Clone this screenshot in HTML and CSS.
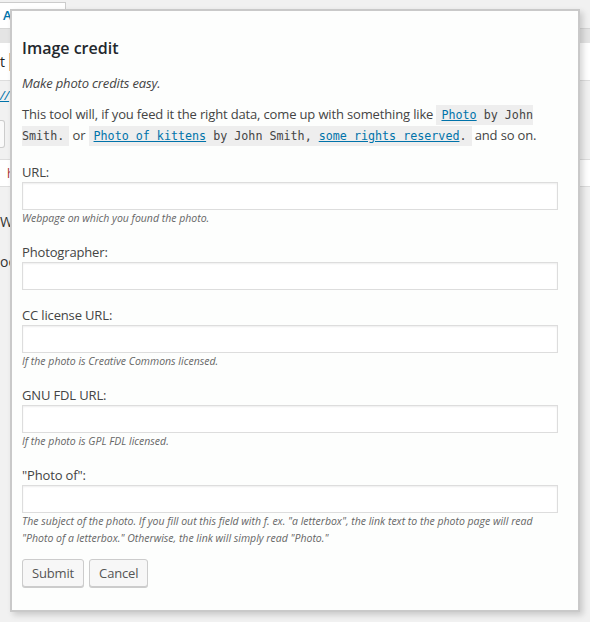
FILE: index.html
```html
<!DOCTYPE html>
<html lang="en">
<head>
<meta charset="utf-8">
<title>Image credit</title>
<link rel="stylesheet" href="styles.css">
</head>
<body>
<div class="admin">
  <div class="tabs"><span class="tab">Add</span></div>
  <div class="band"></div>
  <div class="panel"><span class="frag">t</span><span class="marker"></span></div>
  <div class="linkrow"><span class="perma">//</span></div>
  <div class="boxrow"><span class="box"></span></div>
  <div class="hrow"><span class="hchar">h</span></div>
  <div class="posts">
    <div class="textrow">Wd</div>
    <div class="textrow">oo</div>
  </div>
</div>

<div class="modal" role="dialog" aria-labelledby="ic-title">
  <h2 class="title" id="ic-title">Image credit</h2>
  <p class="lead">Make photo credits easy.</p>
  <p class="intro">This tool will, if you feed it the right data, come up with something like <code><a href="#">Photo</a> by John Smith.</code> or <code><a href="#">Photo of kittens</a> by John Smith, <a href="#">some rights reserved</a>.</code> and so on.</p>
  <form class="form">
    <div class="field">
      <label class="label" for="f-url">URL:</label>
      <input class="input" id="f-url" type="text">
      <p class="help">Webpage on which you found the photo.</p>
    </div>
    <div class="field">
      <label class="label" for="f-ph">Photographer:</label>
      <input class="input" id="f-ph" type="text">
    </div>
    <div class="field">
      <label class="label" for="f-cc">CC license URL:</label>
      <input class="input" id="f-cc" type="text">
      <p class="help">If the photo is Creative Commons licensed.</p>
    </div>
    <div class="field">
      <label class="label" for="f-gnu">GNU FDL URL:</label>
      <input class="input" id="f-gnu" type="text">
      <p class="help">If the photo is GPL FDL licensed.</p>
    </div>
    <div class="field">
      <label class="label" for="f-of">"Photo of":</label>
      <input class="input" id="f-of" type="text">
      <p class="help">The subject of the photo. If you fill out this field with f. ex. "a letterbox", the link text to the photo page will read "Photo of a letterbox." Otherwise, the link will simply read "Photo."</p>
    </div>
    <div class="actions">
      <button class="button" type="button">Submit</button>
      <button class="button" type="button">Cancel</button>
    </div>
  </form>
</div>
</body>
</html>
```
FILE: styles.css
```css
html, body {
  margin: 0;
  padding: 0;
}
body {
  background: #f1f1f1;
  font-family: "Open Sans", "Noto Sans", sans-serif;
  font-size: 13px;
  color: #444;
  width: 590px;
  height: 622px;
  overflow: hidden;
  position: relative;
}

/* background admin page */
.admin {
  display: flex;
  flex-direction: column;
}
.tabs {
  height: 28px;
  padding-top: 2px;
  box-sizing: border-box;
  display: flex;
}
.tab {
  width: 66px;
  height: 26px;
  background: #fff;
  border: 1px solid #ccc;
  border-left: none;
  border-bottom: none;
  box-sizing: border-box;
  color: #0073aa;
  font-weight: 600;
  font-size: 13px;
  line-height: 24px;
  padding-left: 3px;
}
.band {
  height: 14px;
  background: #e4e4e4;
  border-top: 1px solid #d6d6d6;
}
.panel {
  height: 37px;
  background: #fff;
  border-bottom: 1px solid #ddd;
  display: flex;
  align-items: center;
  gap: 4px;
}
.frag {
  font-size: 14px;
  color: #222;
}
.marker {
  width: 2px;
  height: 18px;
  background: #f0c28a;
}
.linkrow {
  height: 28px;
  display: flex;
  align-items: center;
}
.perma {
  color: #0073aa;
  font-style: italic;
  font-size: 13px;
  text-decoration: underline;
}
.boxrow {
  height: 50px;
  display: flex;
  align-items: center;
}
.box {
  width: 4px;
  height: 26px;
  border: 1px solid #ccc;
  border-left: none;
  border-radius: 0 3px 3px 0;
  background: #fafafa;
}
.hrow {
  height: 26px;
  background: #fff;
  border-top: 1px solid #ddd;
  border-bottom: 1px solid #ddd;
  display: flex;
  align-items: center;
  padding-left: 7px;
}
.hchar {
  color: #a33;
  font-size: 12px;
}
.posts {
  padding-top: 15px;
}
.textrow {
  height: 40px;
  line-height: 40px;
  font-size: 14px;
  color: #333;
}

/* modal overlay */
.modal {
  position: absolute;
  left: 10px;
  top: 9px;
  width: 570px;
  box-sizing: border-box;
  background: #fdfefd;
  border: 2px solid #c9c9c9;
  box-shadow: 3px 3px 6px rgba(0, 0, 0, 0.16);
  padding: 24px 20px 23px 10px;
  letter-spacing: -0.15px;
}
.title {
  margin: 0;
  font-size: 16px;
  font-weight: 600;
  line-height: 26px;
  color: #23282d;
  letter-spacing: 0;
}
.lead {
  margin: 12px 0 0;
  font-style: italic;
  line-height: 20px;
}
.intro {
  margin: 11px 0 17px;
  line-height: 21px;
}
code {
  font-family: "DejaVu Sans Mono", "Liberation Mono", monospace;
  font-size: 11.7px;
  line-height: 1;
  letter-spacing: 0;
  background: #eee;
  padding: 3px 5px;
  color: #444;
}
a {
  color: #0073aa;
  text-decoration: underline;
}
.form {
  display: flex;
  flex-direction: column;
  gap: 16px;
}
.field {
  display: flex;
  flex-direction: column;
}
.label {
  line-height: 18px;
  color: #444;
}
.input {
  margin: 1px 0 0;
  height: 28px;
  box-sizing: border-box;
  border: 1px solid #ddd;
  background: #fff;
  box-shadow: inset 0 1px 2px rgba(0, 0, 0, 0.07);
  font: inherit;
  padding: 3px 5px;
  outline: none;
}
.help {
  margin: 0;
  font-size: 10.5px;
  font-style: italic;
  line-height: 17px;
  color: #666;
  letter-spacing: 0;
}
.actions {
  display: flex;
  gap: 5px;
  margin-top: -4px;
}
.button {
  height: 28px;
  padding: 0 9px 1px;
  font-family: inherit;
  font-size: 13px;
  letter-spacing: -0.15px;
  color: #555;
  background: #f7f7f7;
  border: 1px solid #ccc;
  border-radius: 3px;
  box-shadow: 0 1px 0 #ccc;
  cursor: pointer;
}
```
